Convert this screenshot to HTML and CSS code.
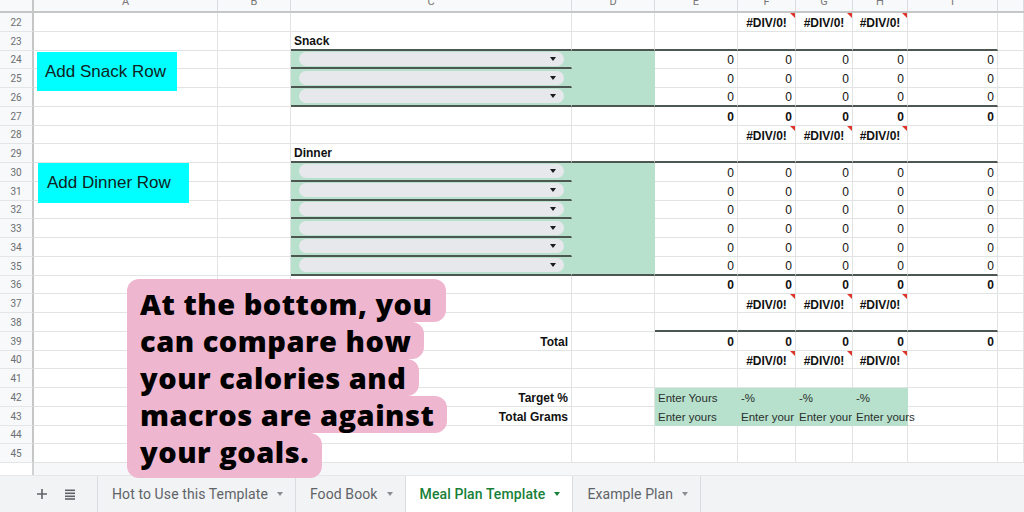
FILE: index.html
```html
<!DOCTYPE html>
<html>
<head>
<meta charset="utf-8">
<link rel="stylesheet" href="styles.css">
</head>
<body>
<div class="page">
  <div class="colhead">
    <div class="corner"></div>
    <div class="ch"><span>A</span></div>
    <div class="ch"><span>B</span></div>
    <div class="ch"><span>C</span></div>
    <div class="ch"><span>D</span></div>
    <div class="ch"><span>E</span></div>
    <div class="ch"><span>F</span></div>
    <div class="ch"><span>G</span></div>
    <div class="ch"><span>H</span></div>
    <div class="ch"><span>I</span></div>
    <div class="ch"><span></span></div>
  </div>

  <div class="grid">
    <div class="row"><div class="n">22</div><div></div><div></div><div></div><div></div><div></div><div class="err">#DIV/0!</div><div class="err">#DIV/0!</div><div class="err">#DIV/0!</div><div></div><div></div></div>
    <div class="row"><div class="n">23</div><div></div><div></div><div class="b dk lab">Snack</div><div class="dk"></div><div class="dk"></div><div class="dk"></div><div class="dk"></div><div class="dk"></div><div class="dk"></div><div></div></div>
    <div class="row"><div class="n">24</div><div></div><div></div><div class="dd dk"><span class="chip"><i class="arr"></i></span></div><div class="g"></div><div class="r">0</div><div class="r">0</div><div class="r">0</div><div class="r">0</div><div class="r">0</div><div></div></div>
    <div class="row"><div class="n">25</div><div></div><div></div><div class="dd dk"><span class="chip"><i class="arr"></i></span></div><div class="g"></div><div class="r">0</div><div class="r">0</div><div class="r">0</div><div class="r">0</div><div class="r">0</div><div></div></div>
    <div class="row"><div class="n">26</div><div></div><div></div><div class="dd dk"><span class="chip"><i class="arr"></i></span></div><div class="g dk"></div><div class="r dk">0</div><div class="r dk">0</div><div class="r dk">0</div><div class="r dk">0</div><div class="r dk">0</div><div></div></div>
    <div class="row"><div class="n">27</div><div></div><div></div><div></div><div></div><div class="r b">0</div><div class="r b">0</div><div class="r b">0</div><div class="r b">0</div><div class="r b">0</div><div></div></div>
    <div class="row"><div class="n">28</div><div></div><div></div><div></div><div></div><div></div><div class="err">#DIV/0!</div><div class="err">#DIV/0!</div><div class="err">#DIV/0!</div><div></div><div></div></div>
    <div class="row"><div class="n">29</div><div></div><div></div><div class="b dk lab">Dinner</div><div class="dk"></div><div class="dk"></div><div class="dk"></div><div class="dk"></div><div class="dk"></div><div class="dk"></div><div></div></div>
    <div class="row"><div class="n">30</div><div></div><div></div><div class="dd dk"><span class="chip"><i class="arr"></i></span></div><div class="g"></div><div class="r">0</div><div class="r">0</div><div class="r">0</div><div class="r">0</div><div class="r">0</div><div></div></div>
    <div class="row"><div class="n">31</div><div></div><div></div><div class="dd dk"><span class="chip"><i class="arr"></i></span></div><div class="g"></div><div class="r">0</div><div class="r">0</div><div class="r">0</div><div class="r">0</div><div class="r">0</div><div></div></div>
    <div class="row"><div class="n">32</div><div></div><div></div><div class="dd dk"><span class="chip"><i class="arr"></i></span></div><div class="g"></div><div class="r">0</div><div class="r">0</div><div class="r">0</div><div class="r">0</div><div class="r">0</div><div></div></div>
    <div class="row"><div class="n">33</div><div></div><div></div><div class="dd dk"><span class="chip"><i class="arr"></i></span></div><div class="g"></div><div class="r">0</div><div class="r">0</div><div class="r">0</div><div class="r">0</div><div class="r">0</div><div></div></div>
    <div class="row"><div class="n">34</div><div></div><div></div><div class="dd dk"><span class="chip"><i class="arr"></i></span></div><div class="g"></div><div class="r">0</div><div class="r">0</div><div class="r">0</div><div class="r">0</div><div class="r">0</div><div></div></div>
    <div class="row"><div class="n">35</div><div></div><div></div><div class="dd dk"><span class="chip"><i class="arr"></i></span></div><div class="g dk"></div><div class="r dk">0</div><div class="r dk">0</div><div class="r dk">0</div><div class="r dk">0</div><div class="r dk">0</div><div></div></div>
    <div class="row"><div class="n">36</div><div></div><div></div><div></div><div></div><div class="r b">0</div><div class="r b">0</div><div class="r b">0</div><div class="r b">0</div><div class="r b">0</div><div></div></div>
    <div class="row"><div class="n">37</div><div></div><div></div><div></div><div></div><div></div><div class="err">#DIV/0!</div><div class="err">#DIV/0!</div><div class="err">#DIV/0!</div><div></div><div></div></div>
    <div class="row"><div class="n">38</div><div></div><div></div><div></div><div></div><div class="dk"></div><div class="dk"></div><div class="dk"></div><div class="dk"></div><div class="dk"></div><div></div></div>
    <div class="row"><div class="n">39</div><div></div><div></div><div class="r b">Total</div><div></div><div class="r b">0</div><div class="r b">0</div><div class="r b">0</div><div class="r b">0</div><div class="r b">0</div><div></div></div>
    <div class="row"><div class="n">40</div><div></div><div></div><div></div><div></div><div></div><div class="err">#DIV/0!</div><div class="err">#DIV/0!</div><div class="err">#DIV/0!</div><div></div><div></div></div>
    <div class="row"><div class="n">41</div><div></div><div></div><div></div><div></div><div></div><div></div><div></div><div></div><div></div><div></div></div>
    <div class="row"><div class="n">42</div><div></div><div></div><div class="r b">Target %</div><div></div><div class="g">Enter Yours</div><div class="g">-%</div><div class="g">-%</div><div class="g">-%</div><div></div><div></div></div>
    <div class="row"><div class="n">43</div><div></div><div></div><div class="r b">Total Grams</div><div></div><div class="g">Enter yours</div><div class="g">Enter your</div><div class="g">Enter your</div><div class="g ov">Enter yours</div><div></div><div></div></div>
    <div class="row"><div class="n">44</div><div></div><div></div><div></div><div></div><div></div><div></div><div></div><div></div><div></div><div></div></div>
    <div class="row"><div class="n">45</div><div></div><div></div><div></div><div></div><div></div><div></div><div></div><div></div><div></div><div></div></div>
  </div>

  <div class="hscroll"><div class="hs-left"></div><div class="hs-track"></div></div>

  <div class="tabs">
    <div class="tools">
      <svg class="plus" width="12" height="12" viewBox="0 0 12 12"><path d="M6 1v10M1 6h10" stroke="#5f6368" stroke-width="1.6" fill="none"/></svg>
      <svg class="list" width="10" height="11" viewBox="0 0 10 11"><rect x="0" y="0.5" width="10" height="1.6" fill="#5f6368"/><rect x="0" y="3.5" width="10" height="1.6" fill="#5f6368"/><rect x="0" y="6.5" width="10" height="1.6" fill="#5f6368"/><rect x="0" y="9.2" width="10" height="1.6" fill="#5f6368"/></svg>
    </div>
    <div class="tab">Hot to Use this Template<i class="caret"></i></div>
    <div class="tab">Food Book<i class="caret"></i></div>
    <div class="tab active">Meal Plan Template<i class="caret"></i></div>
    <div class="tab last">Example Plan<i class="caret"></i></div>
  </div>

  <div class="btn btn-snack">Add Snack Row</div>
  <div class="btn btn-dinner">Add Dinner Row</div>

  <div class="callout">
    <span class="l1">At the bottom, you</span>
    <span>can compare how</span>
    <span>your calories and</span>
    <span>macros are against</span>
    <span class="l5">your goals.</span>
  </div>
</div>
</body>
</html>
```

FILE: styles.css
```css
* { box-sizing: border-box; }
html, body { margin: 0; padding: 0; }
body {
  width: 1024px;
  height: 512px;
  overflow: hidden;
  background: #fff;
  font-family: "Liberation Sans", Arial, sans-serif;
  color: #000;
}
.page {
  --cols: 34px 184px 73px 281px 83px 83px 58px 57px 55px 90px 26px;
  position: relative;
  width: 1024px;
  height: 512px;
  display: flex;
  flex-direction: column;
}

/* column header */
.colhead {
  display: grid;
  grid-template-columns: var(--cols);
  height: 13px;
  background: #f8f9fa;
  border-bottom: 2px solid #c4c7c5;
  flex: none;
}
.colhead > div {
  height: 11px;
  overflow: hidden;
  display: flex;
  align-items: flex-end;
  justify-content: center;
  padding-bottom: 4px;
  border-right: 1px solid #dadce0;
}
.colhead .corner { border-right: 2px solid #c4c7c5; }
.ch span {
  font-family: Roboto, "Liberation Sans", sans-serif;
  font-size: 11px;
  line-height: 11px;
  color: #777;
}

/* grid */
.grid { flex: none; }
.row {
  display: grid;
  grid-template-columns: var(--cols);
  height: 18.75px;
}
.row > div {
  border-right: 1px solid #e2e3e3;
  border-bottom: 1px solid #e2e3e3;
  font-size: 12px;
  line-height: 14px;
  padding: 2px 3px 0;
  white-space: nowrap;
  overflow: hidden;
  display: flex;
  align-items: center;
  color: #111;
}
.row > .n {
  background: #f8f9fa;
  border-right: 2px solid #c4c7c5;
  border-bottom-color: #e4e5e6;
  justify-content: center;
  font-family: Roboto, "Liberation Sans", sans-serif;
  font-size: 10px;
  color: #6b6f73;
}
.row > .r { justify-content: flex-end; }
.row > .b { font-weight: bold; }
.row > .lab { align-items: flex-end; padding-top: 0; padding-bottom: 1px; }
.row > .g {
  background: #b7e1cd;
  border-color: transparent;
  color: #2a2f2c;
  font-size: 11.5px;
}
.row > .ov { overflow: visible; }
.row > .dk { border-bottom: 2px solid #4d5752; }
.row > .dd {
  background: #b7e1cd;
  border-right-color: transparent;
  padding: 0 7px 0 8px;
}
.chip {
  flex: 1;
  height: 14px;
  border-radius: 8px;
  background: #e7e8ec;
  display: flex;
  align-items: center;
  justify-content: flex-end;
  padding-right: 8px;
}
.arr {
  display: block;
  width: 0;
  height: 0;
  border-left: 3.5px solid transparent;
  border-right: 3.5px solid transparent;
  border-top: 4px solid #1b1b1b;
}
.row > .err {
  position: relative;
  justify-content: center;
  font-weight: bold;
  overflow: visible;
  padding-top: 3px;
}
.row > .err::after {
  content: "";
  position: absolute;
  top: 0;
  right: 0;
  border-left: 5px solid transparent;
  border-top: 5px solid #e0352b;
}

/* horizontal scroll strip */
.hscroll {
  flex: none;
  height: 13px;
  display: grid;
  grid-template-columns: 34px 1fr;
  border-bottom: 1px solid #e6e7e8;
}
.hs-left { background: #fff; border-right: 2px solid #d0d2d3; }
.hs-track { background: #f6f7f8; }

/* sheet tabs */
.tabs {
  flex: 1;
  display: flex;
  align-items: stretch;
  background: #f1f3f4;
  font-family: Roboto, "Liberation Sans", sans-serif;
  font-size: 14px;
  letter-spacing: 0.1px;
  color: #5f6368;
}
.tools {
  width: 97px;
  display: flex;
  align-items: center;
  padding-left: 36px;
  gap: 17px;
}
.tab {
  display: flex;
  align-items: center;
  gap: 9px;
  padding: 0 12px 0 14px;
  border-left: 1px solid #dadce0;
  white-space: nowrap;
}
.tab.last { border-right: 1px solid #dadce0; }
.caret {
  display: block;
  width: 0;
  height: 0;
  border-left: 3px solid transparent;
  border-right: 3px solid transparent;
  border-top: 4px solid #8a8e92;
}
.tab.active {
  background: #fff;
  color: #188038;
  font-weight: 500;
}
.tab.active .caret { border-top-color: #188038; }

/* drawn buttons over the sheet */
.btn {
  position: absolute;
  background: #00ffff;
  color: #122;
  font-size: 17px;
  display: flex;
  align-items: center;
}
.btn-snack { left: 37px; top: 52px; width: 140px; height: 39px; padding-left: 8px; }
.btn-dinner { left: 38px; top: 163px; width: 151px; height: 40px; padding-left: 9px; }

/* pink annotation */
.callout {
  position: absolute;
  left: 127px;
  top: 279px;
  display: flex;
  flex-direction: column;
  align-items: flex-start;
  font-family: "Open Sans", sans-serif;
  font-weight: 800;
  font-size: 29px;
  letter-spacing: 0.5px;
  line-height: 37px;
  color: #000;
}
.callout span {
  background: #efb6cf;
  padding: 0 13px;
  border-radius: 0 12px 12px 0;
  white-space: nowrap;
}
.callout .l1 { padding-top: 6px; border-radius: 12px 12px 12px 0; }
.callout .l5 { padding-bottom: 8px; border-radius: 0 12px 12px 12px; }
```
